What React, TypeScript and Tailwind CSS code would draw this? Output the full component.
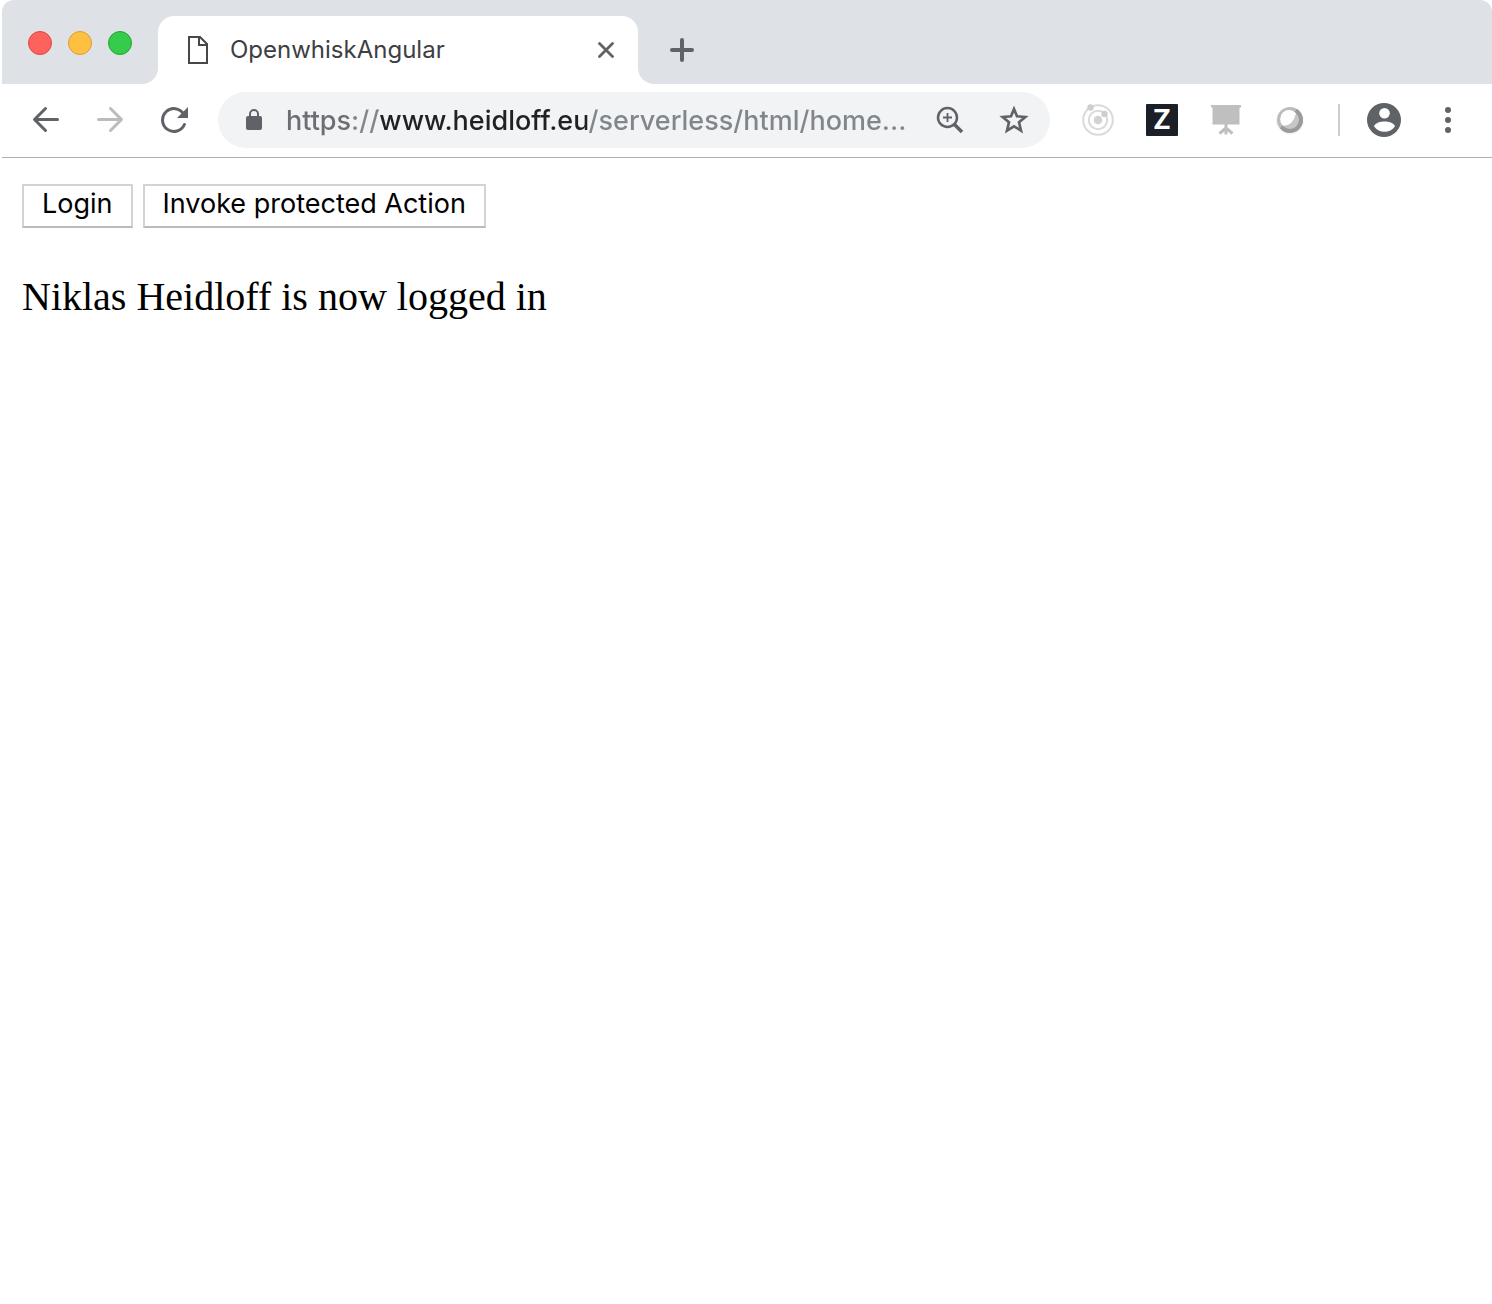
import React from "react";

function IconButton({ label, className, children }: { label: string; className: string; children: React.ReactNode }) {
  return (
    <button type="button" aria-label={label} className={`flex h-14 shrink-0 items-center justify-center ${className}`}>
      {children}
    </button>
  );
}

function TabStrip() {
  return (
    <header className="flex h-[84px] items-end rounded-t-xl bg-[#dee1e6] pl-[26px]">
      <div className="flex gap-4 self-start pt-[31px]">
        <button type="button" aria-label="Close window" className="size-6 rounded-full border border-[#e2463f] bg-[#fd625d]" />
        <button type="button" aria-label="Minimize window" className="size-6 rounded-full border border-[#df9d34] bg-[#fdc041]" />
        <button type="button" aria-label="Zoom window" className="size-6 rounded-full border border-[#1fa833] bg-[#35cb4b]" />
      </div>
      <div className="relative ml-[26px] flex h-[68px] w-[480px] items-center rounded-t-2xl bg-white pl-[30px] pr-4">
        <span className="absolute -left-4 bottom-0 size-4 bg-white">
          <span className="block size-4 rounded-br-2xl bg-[#dee1e6]" />
        </span>
        <span className="absolute -right-4 bottom-0 size-4 bg-white">
          <span className="block size-4 rounded-bl-2xl bg-[#dee1e6]" />
        </span>
        <button type="button" className="flex flex-1 items-center gap-[22px] text-left text-2xl text-[#3c4043]">
          <svg width="20" height="28" viewBox="0 0 20 28" fill="none" stroke="#474747" strokeWidth="2" aria-hidden="true">
            <path d="M1 1H12L19 8V27H1Z" />
            <path d="M11 1V9H19" />
          </svg>
          OpenwhiskAngular
        </button>
        <button type="button" aria-label="Close tab" className="flex size-8 items-center justify-center">
          <svg width="16" height="16" viewBox="0 0 16 16" stroke="#5f6368" strokeWidth="2.8" strokeLinecap="round" aria-hidden="true">
            <path d="M1.500 1.500L14.500 14.500M14.500 1.500L1.500 14.500" />
          </svg>
        </button>
      </div>
      <button type="button" aria-label="New tab" className="ml-4 flex h-[68px] w-14 items-center justify-center">
        <svg width="24" height="24" viewBox="0 0 24 24" stroke="#5f6368" strokeWidth="4" strokeLinecap="round" aria-hidden="true">
          <path d="M12 2V22M2 12H22" />
        </svg>
      </button>
    </header>
  );
}

function Toolbar() {
  return (
    <nav className="flex items-center border-b border-[#b0b0b2] pb-[9px] pl-3 pr-2 pt-2">
      <IconButton label="Back" className="w-16">
        <svg width="28" height="28" viewBox="0 0 28 28" fill="none" stroke="#5f6368" strokeWidth="3" strokeLinecap="round" strokeLinejoin="round" aria-hidden="true">
          <path d="M25.500 13.500H3M13.500 2.500L2.500 13.500L13.500 24.500" />
        </svg>
      </IconButton>
      <IconButton label="Forward" className="w-16">
        <svg width="28" height="28" viewBox="0 0 28 28" fill="none" stroke="#babcbe" strokeWidth="3" strokeLinecap="round" strokeLinejoin="round" aria-hidden="true">
          <path d="M2.500 13.500H25M14.500 2.500L25.500 13.500L14.500 24.500" />
        </svg>
      </IconButton>
      <IconButton label="Reload" className="w-16">
        <svg width="28" height="28" viewBox="0 0 28 28" fill="none" aria-hidden="true">
          <path d="M23.600 8A11.400 11.400 0 1 0 24.400 18.500" stroke="#5f6368" strokeWidth="3" strokeLinecap="round" />
          <path d="M28 1V12H17Z" fill="#5f6368" />
        </svg>
      </IconButton>

      <div className="ml-3 flex h-14 min-w-0 flex-1 items-center rounded-full bg-[#f1f3f4] pl-7 pr-1">
        <svg width="16" height="22" viewBox="0 0 16 22" className="shrink-0" aria-hidden="true">
          <rect x="0" y="7" width="16" height="14" rx="2" fill="#5f6368" />
          <path d="M4 8V5a4 4 0 0 1 8 0V8" fill="none" stroke="#5f6368" strokeWidth="2" />
        </svg>
        <input
          type="text"
          aria-label="Address"
          defaultValue="https://www.heidloff.eu/serverless/html/home..."
          className="ml-6 h-14 min-w-0 flex-1 bg-[linear-gradient(to_right,#6b6f74_0_65px,#80868b_65px_92px,#202124_92px_301px,#80868b_301px)] bg-clip-text text-[27px] font-medium text-transparent outline-none"
        />
        <IconButton label="Zoom level" className="w-16">
          <svg width="28" height="28" viewBox="0 0 28 28" fill="none" stroke="#5f6368" aria-hidden="true">
            <circle cx="11.500" cy="11.500" r="9.500" strokeWidth="2.500" />
            <path d="M11.500 7V16M7 11.500H16" strokeWidth="1.800" />
            <path d="M18.500 18.500L26 26" strokeWidth="3.600" />
          </svg>
        </IconButton>
        <IconButton label="Bookmark this page" className="w-16">
          <svg width="30" height="30" viewBox="0 0 30 30" fill="none" stroke="#5f6368" strokeWidth="2.700" aria-hidden="true">
            <path d="M15 4L18 11.300L26.300 12L20 17.300L22 25.600L15 21.300L8 25.600L10 17.300L3.700 12L12 11.300Z" />
          </svg>
        </IconButton>
      </div>

      <IconButton label="Orbit extension" className="ml-4 w-16">
        <svg width="32" height="32" viewBox="0 0 32 32" fill="none" stroke="#dadada" strokeWidth="2" aria-hidden="true">
          <circle cx="16" cy="16" r="14.800" />
          <circle cx="16" cy="16" r="9.200" />
          <circle cx="16" cy="16" r="4.300" fill="#d2d2d2" stroke="none" />
          <circle cx="8.500" cy="3.500" r="3.200" fill="#cecece" stroke="none" />
          <circle cx="22.500" cy="10" r="3.200" fill="#cecece" stroke="none" />
        </svg>
      </IconButton>
      <IconButton label="Z extension" className="w-16">
        <span className="flex size-8 items-center justify-center rounded-[1px] bg-[#1b2027] text-[27px] font-bold leading-8 text-white">Z</span>
      </IconButton>
      <IconButton label="Presentation extension" className="w-16">
        <svg width="32" height="32" viewBox="0 0 32 32" aria-hidden="true">
          <path d="M1 1H31V3.500H29.500V20.500H2.500V3.500H1Z" fill="#bfbfbf" />
          <path d="M16 20V30.500M16 24L9.500 29.500M16 24L22.500 29.500" fill="none" stroke="#bfbfbf" strokeWidth="3" />
        </svg>
      </IconButton>
      <IconButton label="Sphere extension" className="w-16">
        <svg width="32" height="32" viewBox="0 0 32 32" aria-hidden="true">
          <circle cx="16" cy="17" r="14" fill="#f7f7f7" />
          <circle cx="16" cy="16" r="13" fill="#bcbcbc" />
          <path d="M23 5A13 13 0 1 1 6 24.300Z" fill="#9b9b9b" />
          <circle cx="16" cy="16" r="9" fill="#c6c6c6" />
          <path d="M22 9.300A9 9 0 1 0 9 21.700Q19 22 22 9.300Z" fill="#fff" />
        </svg>
      </IconButton>
      <div className="mx-4 h-8 w-[2px] shrink-0 bg-[#cdcdcd]" />
      <IconButton label="Profile" className="w-14">
        <svg width="34" height="34" viewBox="0 0 34 34" aria-hidden="true">
          <circle cx="17" cy="17" r="17" fill="#5f6368" />
          <circle cx="17.500" cy="10.300" r="5.300" fill="#fff" />
          <path d="M7 23.300C8.500 19.800 13.500 18.500 17.500 18.500S26.500 19.800 28 23.300C25.500 27 21.500 28.800 17.500 28.800S9.500 27 7 23.300Z" fill="#fff" />
        </svg>
      </IconButton>
      <IconButton label="Menu" className="w-[72px]">
        <svg width="6" height="26" viewBox="0 0 6 26" fill="#5f6368" aria-hidden="true">
          <circle cx="3" cy="3" r="3" />
          <circle cx="3" cy="13" r="3" />
          <circle cx="3" cy="23" r="3" />
        </svg>
      </IconButton>
    </nav>
  );
}

function PageButton({ children }: { children: React.ReactNode }) {
  return (
    <button type="button" className="h-11 border-2 border-[#d3d3d3] border-b-[#bababa] bg-white px-[18px] pb-1 text-[27px] leading-9 text-black">
      {children}
    </button>
  );
}

export default function App() {
  return (
    <div className="min-h-screen bg-white pl-[2px] font-['Inter',sans-serif]">
      <TabStrip />
      <Toolbar />
      <main className="px-5 pt-[26px]">
        <div className="flex gap-[10px]">
          <PageButton>Login</PageButton>
          <PageButton>Invoke protected Action</PageButton>
        </div>
        <p className="mt-[46px] font-['Liberation_Serif',serif] text-[40px] leading-[46px] text-black">Niklas Heidloff is now logged in</p>
      </main>
    </div>
  );
}
